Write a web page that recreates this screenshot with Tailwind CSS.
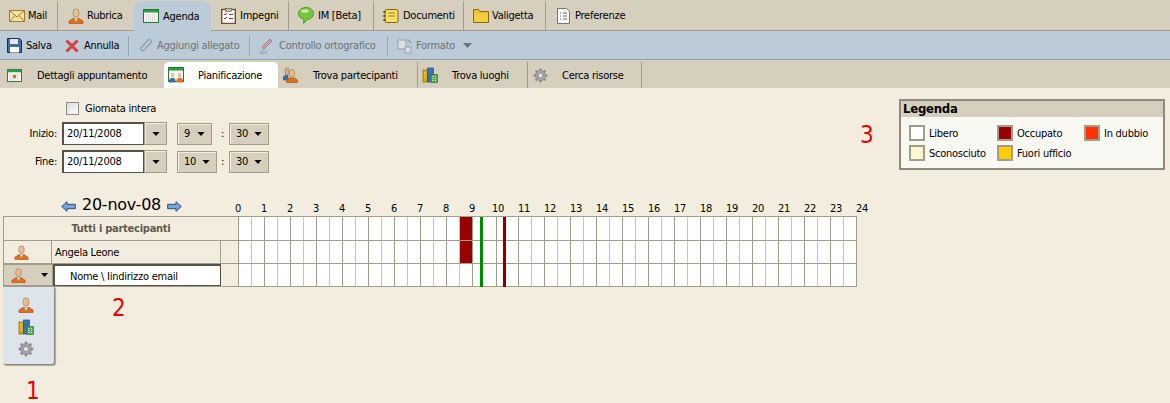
<!DOCTYPE html>
<html lang="it">
<head>
  <meta charset="UTF-8" />
  <title>Agenda - Pianificazione</title>
  <script src="https://cdn.jsdelivr.net/npm/@tailwindcss/browser@4"></script>
</head>
<body class="relative w-[1170px] h-[403px] overflow-hidden bg-[#f3eddf] text-[11px] leading-[13px] tracking-[-0.25px] text-black [font-family:'DejaVu_Sans_Condensed','DejaVu_Sans',sans-serif]">

  <!-- icon sprites -->
  <svg class="hidden">
    <symbol id="person" viewBox="0 0 16 16">
      <path d="M1 15.500v-2.500l4-2.500h6l4 2.500v2.500z" fill="#e07020" stroke="#b05010" stroke-width=".7"/>
      <path d="M6.300 10.500h3.400l-1.700 3z" fill="#fff"/>
      <rect x="5.200" y="1" width="5.600" height="8" rx="2.600" fill="#e8bd90" stroke="#a67c52" stroke-width=".7"/>
    </symbol>
    <symbol id="people" viewBox="0 0 16 16">
      <path d="M0 12v-2l2-1.500h3v3.500l-1 1H0z" fill="#3a70b8" stroke="#24508a" stroke-width=".6"/>
      <rect x="2" y="1" width="4" height="7" rx="2" fill="#d8b080" stroke="#8a7050" stroke-width=".6"/>
      <path d="M3.500 15.500v-2.500l3-2h5l3 2v2.500z" fill="#e07020" stroke="#b05010" stroke-width=".7"/>
      <rect x="6.500" y="2.500" width="5" height="7.500" rx="2.400" fill="#e8bd90" stroke="#a67c52" stroke-width=".7"/>
    </symbol>
    <symbol id="building" viewBox="0 0 16 16">
      <rect x="1" y="3" width="4.500" height="12" fill="#e0a800" stroke="#8a6a00" stroke-width=".7"/>
      <rect x="5.500" y="1" width="6" height="14" fill="#3a70b8" stroke="#24508a" stroke-width=".7"/>
      <rect x="9" y="7.500" width="6.500" height="8" fill="#58a858" stroke="#2f7a2f" stroke-width=".7"/>
      <path d="M10.500 9.500h1m1.500 0h1m-3.500 2h1m1.500 0h1m-3.500 2h1m1.500 0h1" stroke="#fff"/>
      <path d="M2.500 5.500h1m-1 2.500h1m-1 2.500h1" stroke="#fff6c0"/>
    </symbol>
    <symbol id="gear" viewBox="0 0 16 16">
      <path d="M8 .5v15M.5 8h15M2.700 2.700l10.600 10.600M13.300 2.700L2.700 13.300" stroke="#8f8f8f" stroke-width="2.400"/>
      <circle cx="8" cy="8" r="5.500" fill="#a5a5a5" stroke="#808080" stroke-width=".7"/>
      <circle cx="8" cy="8" r="2.600" fill="#e4e4e4" stroke="#777" stroke-width=".7"/>
    </symbol>
    <symbol id="cal" viewBox="0 0 16 16">
      <rect x=".5" y="1.500" width="15" height="13" fill="#f4f4f0" stroke="#1f7a2e"/>
      <rect x="1" y="2" width="14" height="2.500" fill="#2f9a44"/>
      <path d="M3 7h10M3 9h10M3 11h10M3 13h10" stroke="#c8c8c8" stroke-dasharray="1 1"/>
    </symbol>
    <symbol id="calpeople" viewBox="0 0 16 16">
      <rect x=".5" y=".5" width="15" height="14" fill="#f4f4f0" stroke="#1f7a2e"/>
      <rect x="1" y="1" width="14" height="2.500" fill="#2f9a44"/>
      <rect x="3" y="6" width="3" height="4.500" rx="1.400" fill="#e8bd90"/>
      <rect x="10" y="6" width="3" height="4.500" rx="1.400" fill="#e8bd90"/>
      <path d="M1 15.500v-2.500l2-2h3l1.500 2v2.500z" fill="#3a70b8"/>
      <path d="M8.500 15.500v-2.500l1.500-2h3l2 2v2.500z" fill="#e07020"/>
    </symbol>
    <symbol id="down" viewBox="0 0 9 5"><path d="M0 0h9L4.500 5z" fill="currentColor"/></symbol>
    <symbol id="arrow" viewBox="0 0 15 11">
      <path d="M.7 5.500L6 .7v2.600h8.300v4.400H6v2.600z" fill="#7ba4d4" stroke="#24508a"/>
    </symbol>
  </svg>

  <!-- main tabs -->
  <div class="flex h-[31px] bg-[#d6cfbe] border-b border-[#a49c8b] pt-px">
    <div class="flex items-center w-[58px] pl-[9px] gap-[3px] border-r border-[#a49c8b]">
      <svg class="w-[16px] h-[12px]" viewBox="0 0 16 12"><rect x=".5" y=".5" width="15" height="11" fill="#f6e2a0" stroke="#a08030"/><path d="M.5.500L8 7l7.500-6.500M.5 11.500L6 5.500m9.500 6L10 5.500" fill="none" stroke="#a08030"/></svg>
      <span>Mail</span>
    </div>
    <div class="flex items-center w-[76px] pl-[10px] gap-[3px]">
      <svg class="w-[16px] h-[16px]"><use href="#person"/></svg>
      <span>Rubrica</span>
    </div>
    <div class="flex items-center w-[77px] pl-[9px] gap-[4px] bg-[#bbcbd8] rounded-t-[8px] h-[30px]">
      <svg class="w-[16px] h-[16px]"><use href="#cal"/></svg>
      <span>Agenda</span>
    </div>
    <div class="flex items-center w-[78px] pl-[10px] gap-[4px] border-r border-[#a49c8b]">
      <svg class="w-[15px] h-[16px]" viewBox="0 0 15 16"><rect x=".7" y="1.500" width="13.600" height="14" fill="#fff" stroke="#7a4a20" stroke-width="1.400"/><rect x="4.500" y=".5" width="6" height="3" fill="#c8c0a8" stroke="#555" stroke-width=".6"/><path d="M3 6l1 1 2-2M3 10l1 1 2-2" fill="none" stroke="#d02020"/><path d="M8 6.500h4M8 10.500h4" stroke="#555"/></svg>
      <span>Impegni</span>
    </div>
    <div class="flex items-center w-[85px] pl-[9px] gap-[4px] border-r border-[#a49c8b]">
      <svg class="w-[16px] h-[17px]" viewBox="0 0 16 17"><path d="M8 .5c4.200 0 7.500 2.600 7.500 6s-3 5.800-6 6L5.500 16.500l.5-4.200C2.500 11.500.5 9.500.5 6.500.5 3.100 3.800.5 8 .5z" fill="#74c83c" stroke="#4f9a24"/><ellipse cx="7" cy="4" rx="4" ry="1.800" fill="#c4eca4"/></svg>
      <span>IM [Beta]</span>
    </div>
    <div class="flex items-center w-[90px] pl-[9px] gap-[4px] border-r border-[#a49c8b]">
      <svg class="w-[16px] h-[16px]" viewBox="0 0 16 16"><rect x="2" y="1.500" width="13" height="13" rx="1.500" fill="#f8e060" stroke="#806010"/><path d="M0 4h3M0 8h3M0 12h3" stroke="#333"/><path d="M5 5h7M5 8h7" stroke="#a08020"/></svg>
      <span>Documenti</span>
    </div>
    <div class="flex items-center w-[82px] pl-[9px] gap-[3px] border-r border-[#a49c8b]">
      <svg class="w-[16px] h-[14px]" viewBox="0 0 16 14"><path d="M.5 13.500v-13h5l1.500 2h8.500v11z" fill="#eec030" stroke="#8a6a10"/><rect x="1" y="4.500" width="14" height="8.500" fill="#f4cc40"/></svg>
      <span>Valigetta</span>
    </div>
    <div class="flex items-center pl-[11px] gap-[5px]">
      <svg class="w-[13px] h-[16px]" viewBox="0 0 13 16"><path d="M.5.500h9l3 3v12H.5z" fill="#fafafa" stroke="#777"/><path d="M3 5h1m2 0h4M3 8h1m2 0h4M3 11h1m2 0h4" stroke="#666"/></svg>
      <span>Preferenze</span>
    </div>
  </div>

  <!-- toolbar -->
  <div class="flex items-center h-[29px] pt-px bg-[#bbcbd8] border-b border-[#8fa0ae]">
    <div class="flex items-center pl-[7px] w-[64px] gap-[4px]">
      <svg class="w-[15px] h-[15px]" viewBox="0 0 15 15"><path d="M.5.500h12l2 2v12H.5z" fill="#3f6fa8" stroke="#1c3048"/><rect x="3" y="1" width="8" height="5" fill="#e8e8e8"/><rect x="3" y="9" width="9" height="5.500" fill="#fff"/></svg>
      <span>Salva</span>
    </div>
    <div class="flex items-center pl-[1px] w-[65px] h-[20px] gap-[5px] border-r border-[#98a6b0]">
      <svg class="w-[14px] h-[14px]" viewBox="0 0 14 14"><path d="M1.500 1.500l11 11m0-11l-11 11" stroke="#d84040" stroke-width="3"/></svg>
      <span>Annulla</span>
    </div>
    <div class="flex items-center text-[#6d7276] pl-[10px] w-[121px] h-[20px] gap-[4px] border-r border-[#98a6b0]">
      <svg class="w-[14px] h-[15px]" viewBox="0 0 14 15"><path d="M3 9l6-7c2-1.500 4 .5 3 2.500L5 12c-1.500 1.500-4 0-3-2l6-7" fill="none" stroke="#98a2aa" stroke-width="1.500"/></svg>
      <span>Aggiungi allegato</span>
    </div>
    <div class="flex items-center text-[#6d7276] pl-[9px] w-[138px] h-[20px] gap-[4px] border-r border-[#98a6b0]">
      <svg class="w-[16px] h-[17px]" viewBox="0 0 16 17"><path d="M3 10L11 2l2 2-8 8z" fill="#c9a0a8" stroke="#a88088"/><text x="0" y="16.500" font-size="6" fill="#90989e">abc</text></svg>
      <span>Controllo ortografico</span>
    </div>
    <div class="flex items-center text-[#6d7276] pl-[9px] gap-[3px]">
      <svg class="w-[16px] h-[16px]" viewBox="0 0 16 16"><rect x="1" y="2" width="8" height="9" fill="#d8dfe4" stroke="#98a2aa"/><rect x="8" y="9" width="6" height="6" fill="#d8dfe4" stroke="#98a2aa"/><path d="M11 2l3 3" stroke="#8aa0c0" stroke-width="1.500"/></svg>
      <span>Formato</span>
      <svg class="w-[9px] h-[5px] ml-[5px] text-[#6d7276]"><use href="#down"/></svg>
    </div>
  </div>

  <!-- sub tabs -->
  <div class="flex h-[28px] pt-[2px] bg-[#d6cfbe]">
    <div class="flex items-center w-[164px] pl-[7px] gap-[15px]">
      <span class="relative w-[15px] h-[15px]">
        <svg class="w-[15px] h-[15px]"><use href="#cal"/></svg>
        <span class="absolute left-[6px] top-[7px] w-[3px] h-[3px] bg-[#e07020]"></span>
      </span>
      <span>Dettagli appuntamento</span>
    </div>
    <div class="flex items-center w-[114px] pl-[4px] gap-[14px] bg-white rounded-t-[5px]">
      <svg class="w-[16px] h-[16px]"><use href="#calpeople"/></svg>
      <span>Pianificazione</span>
    </div>
    <div class="flex items-center w-[140px] pl-[5px] gap-[14px] border-r border-[#a49c8b]">
      <svg class="w-[16px] h-[16px]"><use href="#people"/></svg>
      <span>Trova partecipanti</span>
    </div>
    <div class="flex items-center w-[110px] pl-[4px] gap-[14px] border-r border-[#a49c8b]">
      <svg class="w-[16px] h-[16px]"><use href="#building"/></svg>
      <span>Trova luoghi</span>
    </div>
    <div class="flex items-center w-[114px] pl-[5px] gap-[14px] border-r border-[#a49c8b]">
      <svg class="w-[15px] h-[15px]"><use href="#gear"/></svg>
      <span>Cerca risorse</span>
    </div>
  </div>

  <!-- content -->
  <div class="flex justify-between pt-[12px] pr-[5px]">
    <div>
      <div class="flex items-center h-[16px] pl-[66px] gap-[6px]">
        <span class="w-[13px] h-[13px] bg-gradient-to-br from-[#d8dce4] to-white border border-[#8a8a80]"></span>
        <span>Giornata intera</span>
      </div>
      <div class="flex items-center mt-[6px] h-[23px]">
        <span class="w-[58px] pr-px text-right">Inizio:</span>
        <span class="w-[82px] h-[23px] ml-[4px] pl-[3px] pt-[3px] bg-white border border-t-2 border-l-2 border-[#55524a]">20/11/2008</span>
        <span class="flex items-center justify-center w-[23px] h-[23px] bg-[#d6cfbe] border border-[#a49c8b] shadow-[inset_1px_1px_0_#f3eddf]"><svg class="w-[8px] h-[4px]"><use href="#down"/></svg></span>
        <span class="flex items-center justify-between w-[35px] h-[22px] ml-[10px] px-[6px] bg-[#d6cfbe] border border-[#a49c8b] shadow-[inset_1px_1px_0_#f3eddf]">9<svg class="w-[8px] h-[4px]"><use href="#down"/></svg></span>
        <span class="w-[17px] pr-[5px] text-right">:</span>
        <span class="flex items-center justify-between w-[40px] h-[22px] px-[6px] bg-[#d6cfbe] border border-[#a49c8b] shadow-[inset_1px_1px_0_#f3eddf]">30<svg class="w-[8px] h-[4px]"><use href="#down"/></svg></span>
      </div>
      <div class="flex items-center mt-[5px] h-[23px]">
        <span class="w-[58px] pr-px text-right">Fine:</span>
        <span class="w-[82px] h-[23px] ml-[4px] pl-[3px] pt-[3px] bg-white border border-t-2 border-l-2 border-[#55524a]">20/11/2008</span>
        <span class="flex items-center justify-center w-[23px] h-[23px] bg-[#d6cfbe] border border-[#a49c8b] shadow-[inset_1px_1px_0_#f3eddf]"><svg class="w-[8px] h-[4px]"><use href="#down"/></svg></span>
        <span class="flex items-center justify-between w-[40px] h-[22px] ml-[10px] px-[6px] bg-[#d6cfbe] border border-[#a49c8b] shadow-[inset_1px_1px_0_#f3eddf]">10<svg class="w-[8px] h-[4px]"><use href="#down"/></svg></span>
        <span class="w-[12px] pr-[5px] text-right">:</span>
        <span class="flex items-center justify-between w-[40px] h-[22px] px-[6px] bg-[#d6cfbe] border border-[#a49c8b] shadow-[inset_1px_1px_0_#f3eddf]">30<svg class="w-[8px] h-[4px]"><use href="#down"/></svg></span>
      </div>
    </div>

    <!-- legend -->
    <div class="w-[266px] h-[71px] -mt-px bg-[#faf8f3] border-2 border-[#8f8a7c]">
      <div class="h-[16px] pl-[2px] bg-[#d6cfbe] text-[13px] leading-[16px] font-bold">Legenda</div>
      <div class="grid grid-cols-[88px_87px_1fr] gap-y-[4px] pl-[8px] pt-[8px]">
        <div class="flex items-center gap-[4px]"><span class="w-[16px] h-[16px] bg-white border-2 border-[#a49c8b]"></span><span class="pt-px">Libero</span></div>
        <div class="flex items-center gap-[4px]"><span class="w-[16px] h-[16px] bg-[#990000] border-2 border-[#a49c8b]"></span><span class="pt-px">Occupato</span></div>
        <div class="flex items-center gap-[4px]"><span class="w-[16px] h-[16px] bg-[#ff3300] border-2 border-[#a49c8b]"></span><span class="pt-px">In dubbio</span></div>
        <div class="flex items-center gap-[4px]"><span class="w-[16px] h-[16px] bg-[#fff6d0] border-2 border-[#a49c8b]"></span><span class="pt-px">Sconosciuto</span></div>
        <div class="flex items-center gap-[4px]"><span class="w-[16px] h-[16px] bg-[#ffcc00] border-2 border-[#a49c8b]"></span><span class="pt-px">Fuori ufficio</span></div>
      </div>
    </div>
  </div>

  <!-- date nav and hours -->
  <div class="flex items-end h-[18px] mt-[25px] pl-[61px]">
    <svg class="w-[15px] h-[11px] mb-[4px]"><use href="#arrow"/></svg>
    <span class="w-[91px] mb-[2px] text-center text-[16px] leading-[18px] [font-family:'DejaVu_Sans',sans-serif]">20-nov-08</span>
    <svg class="w-[15px] h-[11px] mb-[4px] -scale-x-100"><use href="#arrow"/></svg>
    <div id="hours" class="flex ml-[43px] mb-px"></div>
  </div>

  <!-- schedule -->
  <div class="relative ml-[3px] w-[854px] border-r border-[#a49c8b]">
    <div class="flex h-[25px] border-t border-b border-[#a49c8b]">
      <div class="flex items-center justify-center w-[235px] border-l border-[#a49c8b] font-bold text-[#5e5a4e]">Tutti i partecipanti</div>
      <div class="row grid grid-cols-[repeat(18,13px)_10px_14px_9px_13px_repeat(26,13px)] w-[618px]"></div>
    </div>
    <div class="flex h-[23px] border-b border-[#a49c8b]">
      <div class="flex items-center w-[48px] pl-[10px] border-l border-[#a49c8b]"><svg class="w-[15px] h-[15px]"><use href="#person"/></svg></div>
      <div class="flex items-center w-[170px] pl-[3px] pt-px border-x border-[#a49c8b]">Angela Leone</div>
      <div class="w-[17px]"></div>
      <div class="row grid grid-cols-[repeat(18,13px)_10px_14px_9px_13px_repeat(26,13px)] w-[618px]"></div>
    </div>
    <div class="flex h-[23px] border-b border-[#a49c8b]">
      <div class="flex items-center w-[50px] pl-[7px] gap-[15px] bg-[#d6cfbe] border border-[#a49c8b]">
        <svg class="w-[15px] h-[15px] shrink-0"><use href="#person"/></svg>
        <svg class="w-[7px] h-[4px] shrink-0"><use href="#down"/></svg>
      </div>
      <div class="flex items-center w-[168px] pl-[15px] pt-px bg-white border border-t-2 border-l-2 border-[#55524a]">Nome \ Iindirizzo email</div>
      <div class="w-[17px]"></div>
      <div class="row grid grid-cols-[repeat(18,13px)_10px_14px_9px_13px_repeat(26,13px)] w-[618px]"></div>
    </div>
    <!-- now and appointment markers -->
    <span class="absolute left-[477px] top-px w-[3px] h-[70px] bg-[#008a00]"></span>
    <span class="absolute left-[500px] top-px w-[3px] h-[70px] bg-[#8a0000]"></span>
  </div>

  <!-- participant type menu -->
  <div class="flex flex-col items-start gap-[7px] w-[52px] h-[78px] ml-[3px] pt-[10px] pl-[15px] bg-[#dde4ec] rounded-b-[3px] border-r border-b border-[#8a8a80] shadow-[1px_1px_1px_#b0ab9c]">
    <svg class="w-[16px] h-[16px]"><use href="#person"/></svg>
    <svg class="w-[16px] h-[16px] -mt-px"><use href="#building"/></svg>
    <svg class="w-[16px] h-[16px] -mt-px"><use href="#gear"/></svg>
  </div>

  <!-- annotation numbers -->
  <span class="absolute left-[26px] top-[377px] text-[24px] leading-[28px] text-[#e60000]">1</span>
  <span class="absolute left-[112px] top-[294px] text-[24px] leading-[28px] text-[#e60000]">2</span>
  <span class="absolute left-[860px] top-[121px] text-[24px] leading-[28px] text-[#e60000]">3</span>

  <script>
    const hours = document.getElementById('hours');
    for (let h = 0; h <= 24; h++) {
      const label = document.createElement('span');
      label.className = 'w-[26px] text-center';
      label.textContent = h;
      hours.appendChild(label);
    }
    document.querySelectorAll('.row').forEach((row, r) => {
      for (let i = 0; i < 48; i++) {
        const cell = document.createElement('span');
        const line = i % 2 ? 'border-l border-[#c9c4b8]' : 'border-l border-[#a49c8b]';
        cell.className = line + ((r < 2 && i === 17) ? ' bg-[#990000]' : ' bg-white');
        row.appendChild(cell);
      }
    });
  </script>
</body>
</html>
